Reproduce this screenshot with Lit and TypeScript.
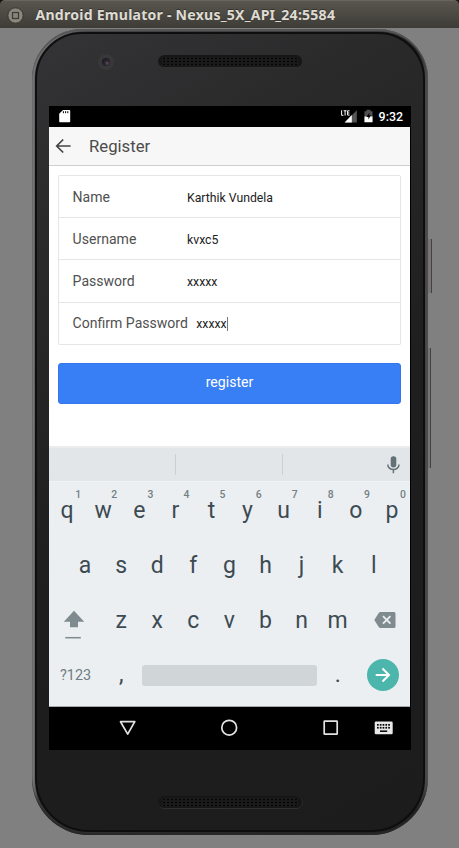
import { LitElement, html, css, svg } from "lit";
import { customElement, property } from "lit/decorators.js";

@customElement("speaker-grille")
class SpeakerGrille extends LitElement {
  static styles = css`
    :host { display: block; width: 145px; height: 13px; }
    .grille {
      box-sizing: border-box; height: 13px; border-radius: 7px; padding: 2px 4px;
      background: #161616; border-bottom: 1px solid #303030; border-right: 1px solid #2c2c2c;
    }
    .dots { height: 9px; background: radial-gradient(circle at 50% 50%, #050505 0.7px, #1b1b1b 1.2px) 0 0 / 4px 3px; }
  `;
  render() {
    return html`<div class="grille"><div class="dots"></div></div>`;
  }
}

@customElement("status-bar")
class StatusBar extends LitElement {
  static styles = css`
    :host { display: flex; height: 21px; background: #000; color: #fff; align-items: center; box-sizing: border-box; padding: 0 7px 0 10px; }
    .sd { width: 12px; height: 14px; margin-top: -1px; }
    .gap { flex: 1; }
    .signal { width: 18px; height: 15px; margin: -1px 6px 0 0; }
    .battery { width: 9px; height: 14px; margin: -1px 6px 0 0; }
    .time { font: 500 12.4px/21px Roboto, sans-serif; }
  `;
  render() {
    return html`
      <svg class="sd" viewBox="0 0 12 14"><path d="M4 1h6.4q.8 0 .8.8v10.6q0 .8-.8.8H1q-.8 0-.8-.8V4.8z" fill="#fff"/><path d="M4.4 2.2v2M6.6 2.2v2M8.8 2.2v2" stroke="#000" stroke-width="1"/></svg>
      <span class="gap"></span>
      <svg class="signal" viewBox="0 0 18 15">
        <path d="M4.8 13.5L16.8 1.2v12.3z" fill="#555"/>
        <path d="M0 0h10v8H0z" fill="#000"/><path d="M4.6 13.5l7.2-7.4v7.4z" fill="#fff"/>
        <path d="M1.6 1.3v5h1.8M3.6 1.8h3M5.1 1.5v5M9.6 1.8H7.6v4.3h2M7.6 4h1.8" fill="none" stroke="#fff" stroke-width="1"/>
      </svg>
      <svg class="battery" viewBox="0 0 9 14"><path d="M2.5 .8h4v1.4h2v11H.5v-11h2z" fill="#505050"/><path d="M.5 7.5h8v5.7h-8z" fill="#fff"/><path d="M5.3 3.7L2.4 8.1h2v2.400l2.500-4.200H5.2z" fill="#000"/></svg>
      <span class="time">9:32</span>`;
  }
}

@customElement("form-row")
class FormRow extends LitElement {
  @property() label = "";
  @property() value = "";
  @property({ type: Boolean }) active = false;
  static styles = css`
    :host { display: block; height: 42.2px; box-sizing: border-box; border-top: 1.6px solid #e6e6e6; }
    .row { display: flex; height: 41px; align-items: center; padding-left: 14px; font-family: Roboto, sans-serif; }
    .label { min-width: 106px; margin-right: 8.4px; font-size: 14.05px; color: #505050; white-space: nowrap; }
    .value { font-size: 12.25px; color: #222; padding-top: 2px; }
    .caret { width: 1px; height: 14px; background: #777; margin-top: 2px; }
  `;
  render() {
    return html`<div class="row">
      <span class="label">${this.label}</span><span class="value">${this.value}</span>
      ${this.active ? html`<span class="caret"></span>` : ""}
    </div>`;
  }
}

@customElement("soft-keyboard")
class SoftKeyboard extends LitElement {
  static styles = css`
    :host { display: block; height: 261px; font-family: Roboto, sans-serif; color: #3c4b53; }
    .suggest { box-sizing: border-box; height: 36px; display: flex; align-items: center; background: #e2e6e9; border-top: 2px solid #ececec; border-bottom: 1px solid #f0f3f5; }
    .slot { box-sizing: border-box; height: 21px; border-right: 1px solid #cbd0d3; width: 107px; }
    .slot.first { width: 127px; }
    .mic { width: 15px; height: 18px; margin-left: 103px; }
    .keys { height: 225px; background: #eceff2; box-sizing: border-box; padding-top: 1px; border-bottom: 1px solid #a8abad; }
    .line { display: flex; height: 55.4px; align-items: center; }
    .line.mid { padding: 0 18px; }
    .line.last { height: 52px; }
    .key { position: relative; width: 36.1px; flex: none; text-align: center; font-size: 23px; line-height: 30px; }
    .num { position: absolute; right: 4px; top: -8px; font-size: 10.4px; font-weight: 500; line-height: 14px; color: #737f84; }
    .side { flex: none; width: 54.1px; display: flex; }
    .shift { width: 22px; height: 31px; margin: 9px 0 0 14px; }
    .back { width: 22px; height: 18px; margin: -2px 0 0 18.3px; }
    .mode { box-sizing: border-box; width: 54.1px; padding-left: 11px; font-size: 14.4px; color: #6f7c81; }
    .space { width: 174.5px; height: 21px; border-radius: 3px; background: #d0d5d8; margin: 0 3px; }
    .enter { width: 32px; height: 32px; border-radius: 50%; background: #4db6ac; margin-left: 11px; }
  `;
  private letters(text: string, nums = false) {
    return [...text].map((c, i) => html`<span class="key">${c}${nums ? html`<span class="num">${(i + 1) % 10}</span>` : ""}</span>`);
  }
  render() {
    return html`
      <div class="suggest">
        <span class="slot first"></span><span class="slot"></span>
        <svg class="mic" viewBox="0 0 15 18"><rect x="4.7" y=".3" width="5.6" height="11.2" rx="2.7" fill="#647177"/><path d="M1.8 8.4a5.6 5.2 0 0 0 11.2 0M7.4 13.7v3.5" fill="none" stroke="#647177" stroke-width="1.5"/></svg>
      </div>
      <div class="keys">
        <div class="line">${this.letters("qwertyuiop", true)}</div>
        <div class="line mid">${this.letters("asdfghjkl")}</div>
        <div class="line">
          <span class="side"><svg class="shift" viewBox="0 0 22 31"><path d="M11 .8L21.2 11.8H15v5.4H7v-5.4H.8z" fill="#7f8b8f"/><path d="M2.3 27.7h15.5" stroke="#7f8b8f" stroke-width="1.5"/></svg></span>
          ${this.letters("zxcvbnm")}
          <span class="side"><svg class="back" viewBox="0 0 22 18"><path d="M6.5 1H20q1.5 0 1.5 1.5v13Q21.500 17 20 17H6.500q-1 0-1.600-.8L.600 9.600q-.4-.6 0-1.200L4.900 1.800Q5.500 1 6.500 1z" fill="#7f8b8f"/><path d="M9 5.200l7.400 7.400M16.400 5.200L9 12.600" stroke="#eceff2" stroke-width="1.800"/></svg></span>
        </div>
        <div class="line last">
          <span class="mode">?123</span><span class="key">,</span><span class="space"></span><span class="key">.</span>
          <svg class="enter" viewBox="0 0 32 32"><path d="M8.700 16h13M15.500 9.500l6.500 6.500-6.500 6.500" fill="none" stroke="#fff" stroke-width="2"/></svg>
        </div>
      </div>`;
  }
}

@customElement("nav-bar")
class NavBar extends LitElement {
  static styles = css`
    :host { display: block; height: 43px; background: #000; }
    .icons { display: block; width: 361px; height: 43px; }
  `;
  render() {
    return html`<svg class="icons" viewBox="0 0 361 43">
      <g fill="none" stroke="#e2e2e2" stroke-width="1.7" stroke-linejoin="round">
        <path d="M71.500 14.700h14.300l-7.100 12.400z"/><circle cx="180.200" cy="20.700" r="7.400"/><rect x="275.200" y="14.200" width="13" height="13" rx=".5"/>
      </g>
      <rect x="325.700" y="14.400" width="18" height="12.800" rx="1.300" fill="#e8e8e8"/>
      ${[0, 1].map((r) => [0, 1, 2, 3, 4].map((c) => svg`<rect x=${328 + c * 2.8} y=${17 + r * 2.900} width="1.700" height="1.700" fill="#000"/>`))}
      <path d="M331 24.200h7.200" stroke="#000" stroke-width="1.500"/>
    </svg>`;
  }
}

@customElement("app-root")
class AppRoot extends LitElement {
  static styles = css`
    :host { display: block; width: 459px; height: 848px; background: #808080; overflow: hidden; font-family: Roboto, sans-serif; }
    .titlebar { box-sizing: border-box; height: 28px; display: flex; align-items: center; padding: 1px 0 0 7px; border-top: 1px solid #68655d; border-radius: 5px 5px 0 0; background: linear-gradient(#58564e, #3d3c37); }
    .window { height: 848px; background: linear-gradient(#17120f 8px, #808080 8px); }
    .btn { width: 17px; height: 17px; margin-right: 11.500px; }
    .title { font: 700 14.100px/24px "Noto Sans", "Open Sans", sans-serif; color: #dfdbd2; white-space: nowrap; letter-spacing: 0.22px; text-shadow: 0 -1px 0 #33322e; }
    .device { position: relative; display: flex; width: 400px; margin: 1px 0 0 32px; }
    .phone {
      box-sizing: border-box; width: 396px; height: 806px; border-radius: 50px 50px 57px 57px; padding: 3px 3px 3px 3px;
      background: linear-gradient(90deg, #666 0, #777 1px, #555 3px, #333 6px, #292929 50%, #202020 97%, #3d3a3b 99%, #555 100%);
      box-shadow: inset 0 2px 1px #555, inset 0 -2px 1px #292728, inset 3px 3px 2px -1px #777;
    }
    .face {
      box-sizing: border-box; height: 800px; border-radius: 47px 47px 54px 54px; border: 2px solid #0e0e0e; padding: 21px 12px 0 12px;
      background: linear-gradient(150deg, #343436 0, #29292a 22%, #1e1e1f 55%, #1c1c1c 100%);
    }
    .top { display: flex; height: 51px; align-items: flex-start; }
    .camera { box-sizing: border-box; width: 16px; height: 16px; border-radius: 50%; border: 4px solid #38383a; background: radial-gradient(circle at 65% 65%, #6a4b59 0, #29252e 35%, #1c1b22 80%); margin: -1px 44px 0 49px; }
    .screen { width: 361px; height: 644px; background: #fff; border-right: 1px solid #000; }
    .header { box-sizing: border-box; height: 39px; display: flex; align-items: center; background: #f7f7f7; border-bottom: 1px solid #cfcfcf; padding-left: 6px; }
    .arrow { width: 17px; height: 16px; margin-right: 17px; }
    .heading { font-size: 16.700px; color: #4c4c4c; }
    .content { height: 280px; box-sizing: border-box; padding: 9px 8.600px 0; }
    .form { box-sizing: border-box; height: 170px; border: 1.400px solid #e6e6e6; border-top: 0; border-radius: 2px; }
    .submit { display: block; width: 100%; height: 41.500px; margin-top: 17.500px; padding: 0 0 3px; border: 1px solid #3575ee; border-radius: 3px; background: #387ef5; color: #fff; font: 14.100px Roboto, sans-serif; }
    .bottom { display: flex; padding: 46px 0 0 109px; }
    .power, .volume { position: absolute; left: 396px; width: 4px; box-sizing: border-box; background: #767373; border-right: 1px solid #454142; }
    .power { top: 210px; height: 54px; }
    .volume { top: 319px; height: 120px; width: 3px; }
  `;
  render() {
    return html`<div class="window">
      <div class="titlebar">
        <svg class="btn" viewBox="0 0 17 17"><circle cx="8.500" cy="8.500" r="7.700" fill="#8a877e" stroke="#37352f"/><rect x="5.500" y="5.500" width="6" height="6" fill="#86837a" stroke="#3b3934" stroke-width="1.200"/></svg>
        <span class="title">Android Emulator - Nexus_5X_API_24:5584</span>
      </div>
      <div class="device">
        <div class="phone"><div class="face">
          <div class="top"><span class="camera"></span><speaker-grille></speaker-grille></div>
          <div class="screen">
            <status-bar></status-bar>
            <div class="header">
              <svg class="arrow" viewBox="0 0 17 16"><path d="M15.600 8H2M8.200 1.500L1.700 8l6.500 6.500" fill="none" stroke="#444" stroke-width="1.700"/></svg>
              <span class="heading">Register</span>
            </div>
            <div class="content">
              <div class="form">
                <form-row label="Name" value="Karthik Vundela"></form-row>
                <form-row label="Username" value="kvxc5"></form-row>
                <form-row label="Password" value="xxxxx"></form-row>
                <form-row label="Confirm Password" value="xxxxx" active></form-row>
              </div>
              <button class="submit">register</button>
            </div>
            <soft-keyboard></soft-keyboard>
            <nav-bar></nav-bar>
          </div>
          <div class="bottom"><speaker-grille></speaker-grille></div>
        </div></div>
        <span class="power"></span><span class="volume"></span>
      </div>
    </div>`;
  }
}
